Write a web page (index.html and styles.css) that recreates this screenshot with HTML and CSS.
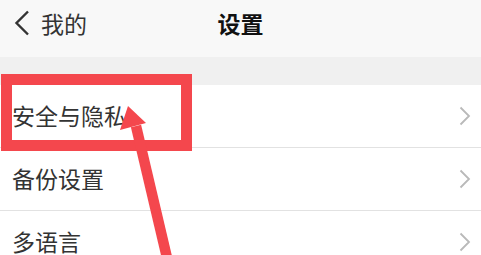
FILE: index.html
```html
<!DOCTYPE html>
<html lang="zh-CN">
<head>
    <meta charset="UTF-8">
    <meta name="viewport" content="width=device-width, initial-scale=1.0">
    <title>设置</title>
    <link rel="stylesheet" href="styles.css">
</head>
<body>
    <div class="page">
        <div class="nav-bar">
            <div class="back">
                <svg class="back-icon" width="16" height="26" viewBox="0 0 16 26">
                    <polyline points="14,1.5 2.5,13 14,24.5" fill="none" stroke="#333" stroke-width="2.4" />
                </svg>
                <span>我的</span>
            </div>
            <div class="title">设置</div>
        </div>
        <div class="gap"></div>
        <ul class="menu">
            <li class="menu-item">
                <span>安全与隐私</span>
                <svg class="arrow" width="12" height="20" viewBox="0 0 12 20">
                    <polyline points="1.5,1.5 10,10 1.5,18.5" fill="none" stroke="#b9b9b9" stroke-width="1.8" />
                </svg>
            </li>
            <li class="menu-item">
                <span>备份设置</span>
                <svg class="arrow" width="12" height="20" viewBox="0 0 12 20">
                    <polyline points="1.5,1.5 10,10 1.5,18.5" fill="none" stroke="#b9b9b9" stroke-width="1.8" />
                </svg>
            </li>
            <li class="menu-item">
                <span>多语言</span>
                <svg class="arrow" width="12" height="20" viewBox="0 0 12 20">
                    <polyline points="1.5,1.5 10,10 1.5,18.5" fill="none" stroke="#b9b9b9" stroke-width="1.8" />
                </svg>
            </li>
        </ul>

        <!-- annotation drawn over the screenshot -->
        <svg class="markup" width="481" height="255" viewBox="0 0 481 255">
            <rect x="6.5" y="79.5" width="180" height="66" fill="none" stroke="#f4474d" stroke-width="11" />
            <line x1="168" y1="262" x2="136" y2="126" stroke="#f4474d" stroke-width="10.5" />
            <polygon points="128,106 146,123 120,130" fill="#f4474d" />
        </svg>
    </div>
</body>
</html>
```

FILE: styles.css
```css
body {
    margin: 0;
    padding: 0;
    font-family: "Noto Sans CJK SC", "Noto Sans", sans-serif;
    background-color: #ffffff;
    overflow: hidden;
}
.page {
    position: relative;
    width: 481px;
    height: 255px;
    overflow: hidden;
}
.nav-bar {
    position: relative;
    height: 57px;
    background-color: #f8f8f8;
    display: flex;
    align-items: center;
    justify-content: center;
}
.back {
    position: absolute;
    left: 14px;
    top: 0;
    height: 57px;
    display: flex;
    align-items: center;
    gap: 11px;
    font-size: 23px;
    color: #333333;
}
.back-icon {
    display: block;
    margin-top: -12px;
}
.back span {
    margin-top: -12px;
}
.title {
    font-size: 23px;
    font-weight: bold;
    color: #111111;
    margin-top: -12px;
}
.gap {
    height: 28px;
    background-color: #f0f0f0;
}
.menu {
    list-style: none;
    margin: 0;
    padding: 0;
}
.menu-item {
    height: 62px;
    padding: 0 10px 0 12px;
    display: flex;
    align-items: center;
    justify-content: space-between;
    border-bottom: 1px solid #e2e2e2;
    font-size: 23px;
    color: #333333;
}
.menu-item span {
    margin-top: -2px;
}
.markup {
    position: absolute;
    top: 0;
    left: 0;
    pointer-events: none;
}
```
